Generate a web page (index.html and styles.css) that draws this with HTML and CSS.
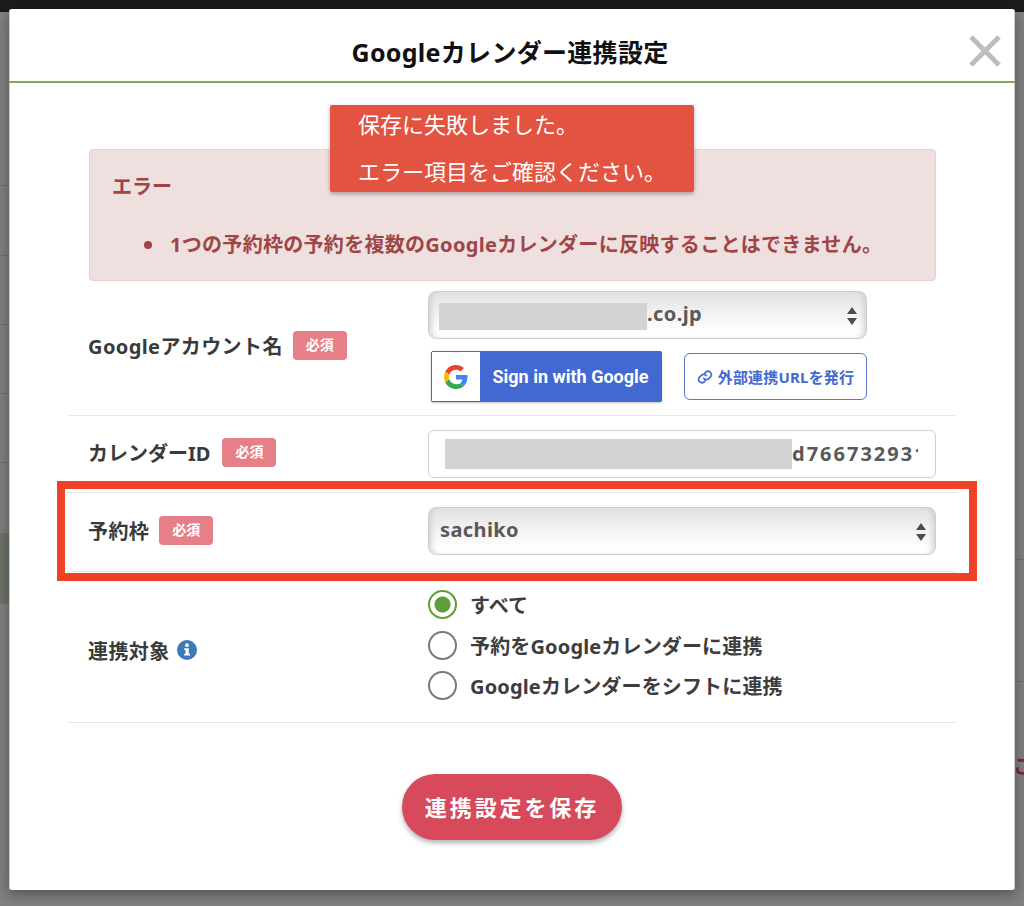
FILE: index.html
```html
<!DOCTYPE html>
<html>
<head>
    <meta charset="utf-8">
    <title>Googleカレンダー連携設定</title>
    <link rel="stylesheet" href="styles.css">
</head>
<body>

    <!-- page behind the overlay, only the edges show -->
    <div class="behind behind-left">
        <div class="behind-row"></div>
        <div class="behind-row"></div>
        <div class="behind-row"></div>
        <div class="behind-row"></div>
        <div class="behind-row"></div>
        <div class="behind-row"></div>
        <div class="behind-cell"></div>
    </div>
    <div class="behind behind-right">
        <div class="behind-line"></div>
        <div class="behind-line"></div>
    </div>
    <div class="backdrop-text">こだ</div>

    <div class="modal">
        <div class="modal-header">
            <h2>Googleカレンダー連携設定</h2>
            <svg class="close" viewBox="0 0 34 34" aria-label="閉じる">
                <path d="M3 3 L31 31 M31 3 L3 31" />
            </svg>
        </div>

        <div class="modal-body">
            <div class="toast">
                <p>保存に失敗しました。</p>
                <p>エラー項目をご確認ください。</p>
            </div>

            <div class="alert">
                <h4>エラー</h4>
                <ul>
                    <li>1つの予約枠の予約を複数のGoogleカレンダーに反映することはできません。</li>
                </ul>
            </div>

            <div class="row row-account">
                <div class="label">Googleアカウント名 <span class="badge">必須</span></div>
                <div class="field field-short">
                    <div class="select">
                        <span class="redact redact-account"></span>.co.jp
                        <svg class="arrows" viewBox="0 0 10 18"><path d="M5 0 L10 7 H0 Z M5 18 L0 11 H10 Z" /></svg>
                    </div>
                    <div class="actions">
                        <div class="google-btn">
                            <span class="google-icon">
                                <svg viewBox="0 0 48 48" width="24" height="24">
                                    <path fill="#EA4335" d="M24 9.500c3.500 0 6.700 1.300 9.100 3.500l6.800-6.800C35.800 2.400 30.300 0 24 0 14.600 0 6.500 5.400 2.600 13.200l7.900 6.200C12.400 13.600 17.700 9.500 24 9.500z"/>
                                    <path fill="#4285F4" d="M47 24.500c0-1.600-.1-3.100-.4-4.500H24v9h12.900c-.6 3-2.200 5.500-4.700 7.200l7.600 5.900C44.300 37.900 47 31.800 47 24.500z"/>
                                    <path fill="#FBBC05" d="M10.500 28.600c-.5-1.400-.8-3-.8-4.600s.3-3.200.8-4.600l-7.900-6.200C.9 16.500 0 20.100 0 24s.9 7.500 2.600 10.800l7.900-6.200z"/>
                                    <path fill="#34A853" d="M24 48c6.500 0 11.900-2.100 15.800-5.800l-7.600-5.900c-2.100 1.400-4.900 2.300-8.200 2.300-6.300 0-11.600-4.100-13.500-9.900l-7.900 6.200C6.500 42.600 14.600 48 24 48z"/>
                                </svg>
                            </span>
                            <span class="google-text">Sign in with Google</span>
                        </div>
                        <div class="url-btn">
                            <svg viewBox="0 0 24 24" width="16" height="16">
                                <path d="M10 14a5 5 0 0 0 7.500.5l3-3a5 5 0 0 0-7-7l-1.700 1.700" />
                                <path d="M14 10a5 5 0 0 0-7.500-.5l-3 3a5 5 0 0 0 7 7l1.700-1.700" />
                            </svg>
                            外部連携URLを発行
                        </div>
                    </div>
                </div>
            </div>

            <div class="row row-calendar">
                <div class="label">カレンダーID <span class="badge">必須</span></div>
                <div class="field">
                    <div class="input">
                        <div class="input-clip"><span class="redact redact-calendar"></span><span class="input-value">d766732931</span></div>
                    </div>
                </div>
            </div>

            <div class="row row-frame">
                <div class="label">予約枠 <span class="badge">必須</span></div>
                <div class="field">
                    <div class="select">
                        sachiko
                        <svg class="arrows" viewBox="0 0 10 18"><path d="M5 0 L10 7 H0 Z M5 18 L0 11 H10 Z" /></svg>
                    </div>
                </div>
            </div>

            <div class="row row-target">
                <div class="label label-target">連携対象
                    <svg class="info" viewBox="0 0 20 20">
                        <circle cx="10" cy="10" r="10" fill="#3f7ab8" />
                        <circle cx="10" cy="5.200" r="1.900" fill="#fff" />
                        <path d="M7.200 8.200 H11.800 V13.700 H13 V15.600 H7.200 V13.700 H8.500 V10.100 H7.200 Z" fill="#fff" />
                    </svg>
                </div>
                <div class="field radios">
                    <div class="radio-item"><span class="radio checked"></span>すべて</div>
                    <div class="radio-item"><span class="radio"></span>予約をGoogleカレンダーに連携</div>
                    <div class="radio-item"><span class="radio"></span>Googleカレンダーをシフトに連携</div>
                </div>
            </div>

            <div class="save-wrap">
                <button class="save-btn">連携設定を保存</button>
            </div>
        </div>
    </div>

    <div class="annotation"></div>

</body>
</html>
```

FILE: styles.css
```css
* {
    box-sizing: border-box;
}
html, body {
    height: 906px;
    overflow: hidden;
}
body {
    margin: 0;
    padding: 9px;
    background: linear-gradient(#1b1b1d 0, #1b1b1d 12px, #7f7f7f 12px);
    font-family: "Noto Sans", "Noto Sans CJK JP", sans-serif;
    color: #3d3d3d;
}
.behind {
    position: absolute;
    width: 9px;
}
.behind-left {
    top: 117px;
    left: 0;
}
.behind-right {
    top: 490px;
    right: 0;
}
.behind-row {
    height: 69.300px;
    border-bottom: 1px solid #6e6e6e;
}
.behind-row:nth-child(6) {
    border-bottom: none;
}
.behind-cell {
    height: 71px;
    background-color: #6c7369;
}
.behind-line {
    height: 70px;
    border-bottom: 1px solid #6e6e6e;
}
.behind-line + .behind-line {
    height: 122px;
}
.backdrop-text {
    position: absolute;
    top: 753px;
    left: 1013px;
    font-size: 20px;
    line-height: 28px;
    font-weight: 700;
    color: #7a2a35;
    white-space: nowrap;
}
.modal {
    position: relative;
    height: 881px;
    background-color: #fff;
    border-radius: 3px;
    box-shadow: 0 4px 14px rgba(0, 0, 0, 0.35), inset 1px 0 #ccc, inset -1px 0 #ccc;
}
.modal-header {
    position: relative;
    height: 74px;
    padding: 12px 4px 0 0;
    border-bottom: 2px solid #7fa95c;
    display: flex;
    align-items: center;
    justify-content: center;
}
.modal-header h2 {
    margin: 0;
    font-size: 25px;
    font-weight: 700;
    letter-spacing: 0.300px;
    color: #111;
}
.close {
    position: absolute;
    top: 25px;
    right: 13px;
    width: 34px;
    height: 34px;
}
.close path {
    stroke: #bdbdbd;
    stroke-width: 5;
    fill: none;
}
.modal-body {
    position: relative;
    padding: 66px 58px 0;
}

/* toast over the alert */
.toast {
    position: absolute;
    top: 22px;
    left: 321px;
    width: 364px;
    height: 87px;
    padding: 0 28px;
    background-color: #e25441;
    color: #fff;
    border-radius: 2px;
    box-shadow: 0 2px 4px rgba(0, 0, 0, 0.3);
    font-size: 22px;
    font-weight: 400;
}
.toast p {
    margin: 0;
    height: 47px;
    line-height: 38px;
    white-space: nowrap;
}
.alert {
    margin: 0 21px 0 22px;
    height: 132px;
    padding: 24px 22px;
    background-color: #efdfdf;
    border: 1px solid #e9cfcf;
    border-radius: 4px;
    color: #a04545;
    font-weight: 700;
}
.alert h4 {
    margin: 0;
    font-size: 20px;
    line-height: 26px;
}
.alert ul {
    margin: 32px 0 0;
    padding-left: 32px;
    list-style: none;
    font-size: 20px;
    line-height: 26px;
    letter-spacing: 0.300px;
    white-space: nowrap;
}
.alert li::before {
    content: "";
    display: inline-block;
    width: 8px;
    height: 8px;
    margin-right: 18px;
    vertical-align: 3px;
    border-radius: 50%;
    background-color: #a04545;
}

.row {
    display: flex;
    align-items: center;
    border-bottom: 1px solid #e8e8e8;
    padding-left: 21px;
}
.row-account {
    height: 135px;
    padding-bottom: 3px;
}
.row-account .label {
    margin-top: -2px;
}
.row-calendar {
    height: 77px;
}
.row-calendar .label {
    margin-top: -3px;
    letter-spacing: 0;
    gap: 12px;
}
.row-frame {
    height: 79px;
    padding-bottom: 3px;
}
.row-target {
    height: 151px;
}
.label {
    width: 340px;
    flex-shrink: 0;
    font-size: 20px;
    font-weight: 700;
    letter-spacing: 0.400px;
    display: flex;
    align-items: center;
    gap: 10px;
    color: #3a3a3a;
}
.label-target {
    padding-top: 6px;
    gap: 7px;
}
.badge {
    display: inline-block;
    width: 54px;
    height: 29px;
    line-height: 28px;
    text-align: center;
    background-color: #e67f87;
    color: #fff;
    border-radius: 4px;
    font-size: 14px;
    font-weight: 700;
    letter-spacing: 0;
}
.field {
    width: 508px;
}
.field-short {
    width: 439px;
}
.select {
    position: relative;
    height: 48px;
    padding: 0 0 3px 11px;
    display: flex;
    align-items: center;
    border: 1px solid #cfcfcf;
    border-radius: 8px;
    background: linear-gradient(#e2e2e2, #f2f2f2 45%, #fff 90%);
    box-shadow: inset 6px 0 6px -4px #ccc, inset -6px 0 6px -4px #ccc;
    color: #595959;
    font-size: 20px;
    font-weight: 700;
    letter-spacing: 0.400px;
}
.arrows {
    position: absolute;
    right: 9px;
    top: 15px;
    width: 10px;
    height: 18px;
    fill: #4d4d4d;
}
.redact {
    display: inline-block;
    background-color: #d3d3d3;
    flex-shrink: 0;
}
.redact-account {
    width: 208px;
    height: 27px;
    margin: 6px 0 0 -1px;
}
.redact-calendar {
    width: 347px;
    height: 30px;
}
.actions {
    display: flex;
    justify-content: space-between;
    align-items: center;
    margin-top: 12px;
    padding-left: 3px;
}
.google-btn {
    display: flex;
    width: 231px;
    height: 51px;
    background-color: #4169d1;
    border: 1px solid #4169d1;
    border-radius: 2px;
    box-shadow: 0 1px 2px rgba(0, 0, 0, 0.25);
}
.google-icon {
    width: 48px;
    background-color: #fff;
    display: flex;
    align-items: center;
    justify-content: center;
}
.google-text {
    flex: 1;
    text-align: center;
    line-height: 49px;
    color: #fff;
    font-family: Roboto, sans-serif;
    font-size: 18px;
    font-weight: 700;
    white-space: nowrap;
}
.url-btn {
    width: 183px;
    height: 47px;
    border: 1.500px solid #5577d6;
    border-radius: 6px;
    display: flex;
    align-items: center;
    justify-content: center;
    gap: 5px;
    color: #4169d1;
    font-size: 15px;
    font-weight: 700;
    letter-spacing: 0.200px;
    white-space: nowrap;
}
.url-btn svg path {
    fill: none;
    stroke: #4169d1;
    stroke-width: 2.500;
    stroke-linecap: round;
}
.input {
    height: 48px;
    padding: 0 17px 0 16px;
    display: flex;
    align-items: center;
    border: 1px solid #cfcfcf;
    border-radius: 6px;
    color: #595959;
    font-size: 20px;
    font-weight: 700;
}
.input-clip {
    display: flex;
    align-items: center;
    width: 100%;
    height: 30px;
    margin-top: -1px;
    overflow: hidden;
    white-space: nowrap;
}
.input-value {
    letter-spacing: 2px;
}
.info {
    width: 20px;
    height: 20px;
}
.radios {
    display: flex;
    flex-direction: column;
    gap: 8.300px;
    margin-top: -4px;
}
.radio-item {
    display: flex;
    align-items: center;
    gap: 13px;
    height: 32px;
    font-size: 20px;
    font-weight: 700;
    letter-spacing: 0.150px;
    white-space: nowrap;
}
.radio {
    width: 29px;
    height: 29px;
    border: 2.500px solid #7a7a7a;
    border-radius: 50%;
    flex-shrink: 0;
    background-color: #fff;
}
.radio.checked {
    border-color: #5e9e3a;
    background: radial-gradient(circle, #5e9e3a 0, #5e9e3a 7.500px, #fff 8.500px);
}
.save-wrap {
    display: flex;
    justify-content: center;
    margin-top: 51px;
}
.save-btn {
    width: 220px;
    height: 66px;
    padding-bottom: 3px;
    border: none;
    border-radius: 33px;
    background-color: #d74a5c;
    color: #fff;
    font-family: inherit;
    font-size: 22px;
    font-weight: 700;
    letter-spacing: 2.900px;
    box-shadow: 0 3px 5px rgba(0, 0, 0, 0.3);
}

/* red box drawn on top of the screenshot */
.annotation {
    position: absolute;
    top: 481px;
    left: 57px;
    width: 920px;
    height: 100px;
    border: 8px solid #ee4227;
}
```
